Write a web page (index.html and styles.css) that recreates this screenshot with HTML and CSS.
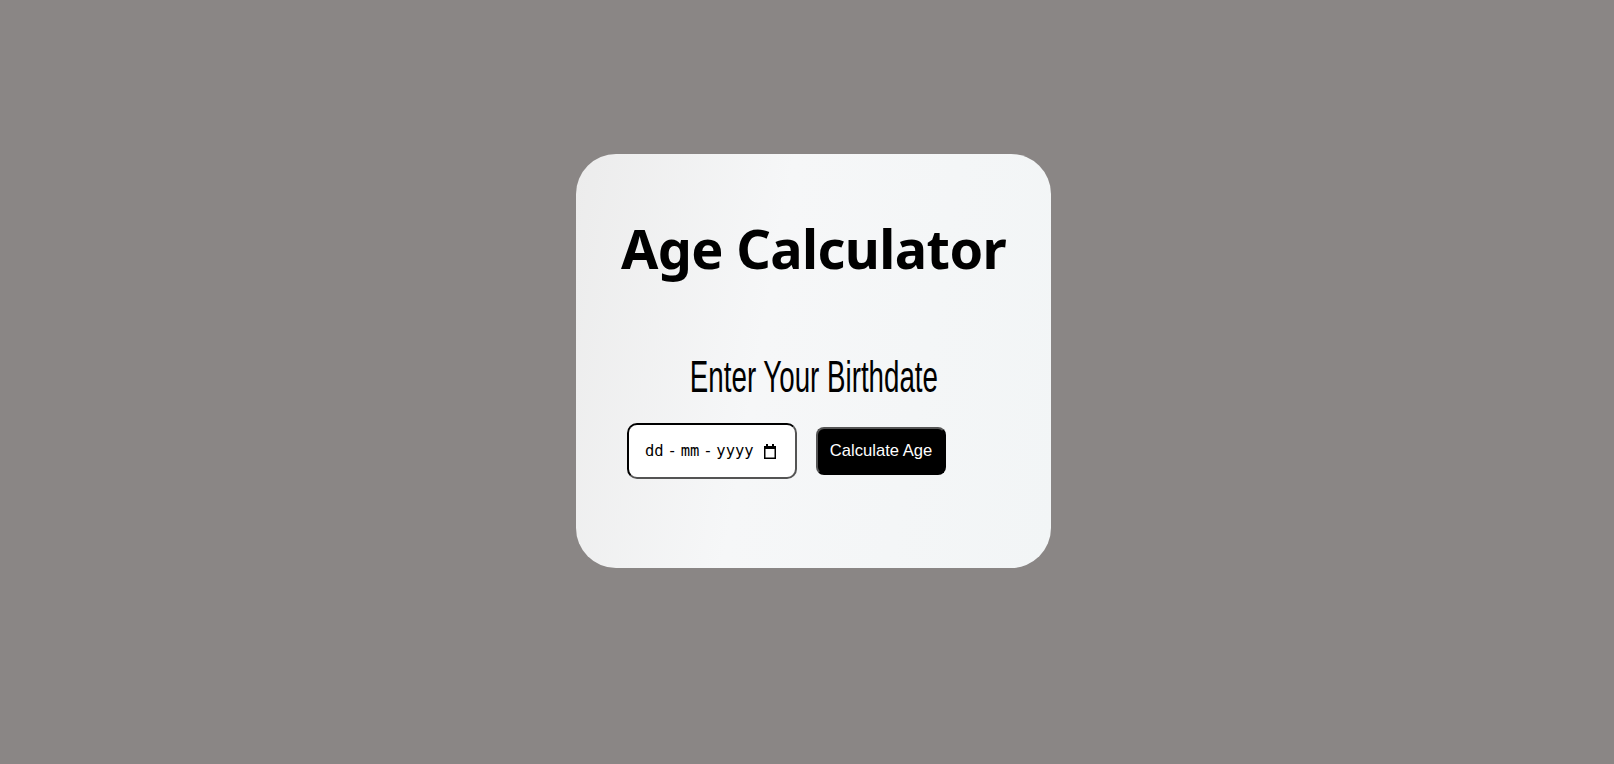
FILE: index.html
```html
<!DOCTYPE html>
<html lang="en">
<head>
<meta charset="utf-8">
<title>Age Calculator</title>
<link rel="stylesheet" href="styles.css">
</head>
<body>
<main class="page">
  <section class="card">
    <h1 class="title">Age Calculator</h1>
    <h2 class="subtitle"><span class="subtitle-text">Enter Your Birthdate</span></h2>
    <div class="controls">
      <label class="date-field">
        <input class="date-input" type="text" placeholder="dd - mm - yyyy" aria-label="Birthdate">
        <svg class="cal-icon" width="14" height="15" viewBox="0 0 14 15" aria-hidden="true">
          <rect x="3" y="0" width="2" height="3" fill="#000"/>
          <rect x="9" y="0" width="2" height="3" fill="#000"/>
          <rect x="1" y="2" width="12" height="3" fill="#000"/>
          <rect x="1.75" y="2.75" width="10.5" height="11.5" fill="none" stroke="#000" stroke-width="1.5"/>
        </svg>
      </label>
      <button class="calc-btn" type="button">Calculate Age</button>
    </div>
  </section>
</main>
</body>
</html>
```

FILE: styles.css
```css
html, body {
  margin: 0;
  padding: 0;
  height: 100%;
}

body {
  background: #8a8685;
  font-family: "Liberation Sans", Arial, sans-serif;
}

.page {
  display: flex;
  justify-content: center;
  align-items: flex-start;
  padding-top: 154px;
  padding-left: 13px;
  box-sizing: border-box;
  min-height: 100%;
}

.card {
  width: 475px;
  height: 414px;
  box-sizing: border-box;
  border-radius: 40px;
  background: linear-gradient(100deg, #ececec 0%, #f6f7f8 40%, #f2f5f6 100%);
  display: flex;
  flex-direction: column;
  align-items: center;
}

.title {
  margin: 62px 0 0;
  font-family: "Noto Sans", "Open Sans", sans-serif;
  font-weight: 700;
  font-size: 54px;
  line-height: 64px;
  color: #000;
  letter-spacing: -0.6px;
}

.subtitle {
  margin: 73px 0 0;
  font-family: "Liberation Sans Narrow", "Liberation Sans", sans-serif;
  font-weight: 400;
  font-size: 44px;
  line-height: 48px;
  color: #000;
  white-space: nowrap;
}

.subtitle-text {
  display: inline-block;
  transform: scaleX(0.63);
}

.controls {
  align-self: stretch;
  display: flex;
  align-items: center;
  gap: 19px;
  padding-left: 51px;
  margin-top: 22px;
}

.date-field {
  width: 170px;
  height: 56px;
  box-sizing: border-box;
  border: 2px inset #000;
  border-radius: 10px;
  background: #fff;
  padding: 0 18px 0 16px;
  display: flex;
  align-items: center;
  gap: 4px;
}

.date-input {
  flex: 1;
  min-width: 0;
  border: none;
  outline: none;
  background: transparent;
  padding: 0;
  font-family: "DejaVu Sans Mono", "Liberation Mono", monospace;
  font-size: 15.5px;
  word-spacing: -5.5px;
  color: #000;
}

.date-input::placeholder {
  color: #000;
  opacity: 1;
  word-spacing: -5.5px;
}

.cal-icon {
  flex: none;
  display: block;
}

.calc-btn {
  width: 130px;
  height: 48px;
  box-sizing: border-box;
  border: 2px outset #000;
  border-radius: 8px;
  background: #000;
  color: #fff;
  font-family: "Liberation Sans", Arial, sans-serif;
  font-size: 16.6px;
  padding: 0;
  cursor: pointer;
}
```
